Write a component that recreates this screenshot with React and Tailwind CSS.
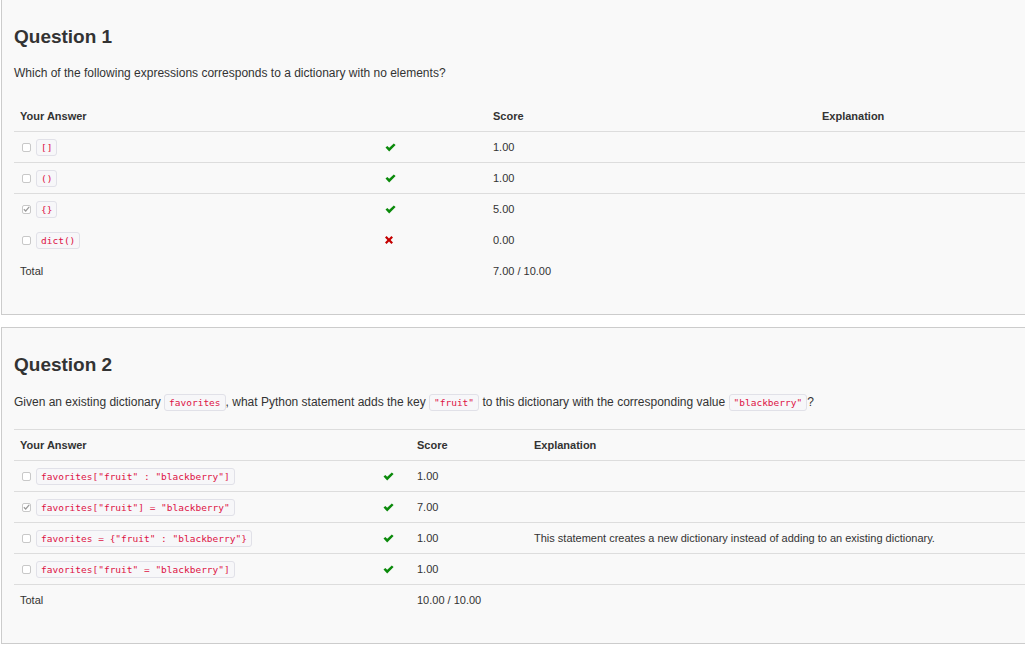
import React from 'react';

const Code = ({ children }) => (
  <code className="inline-block rounded-[3px] border border-[#e1e1e8] bg-[#f7f7f9] px-[4px] text-[9.5px] leading-[15px] text-[#dd1144] align-middle whitespace-pre font-['DejaVu_Sans_Mono',monospace]">
    {children}
  </code>
);

const Box = ({ checked }) => (
  <span className="ml-[2px] inline-flex h-[9px] w-[9px] shrink-0 items-center justify-center rounded-[2px] border border-[#c8c8c8] bg-white">
    {checked && (
      <svg width="7" height="6" viewBox="0 0 7 6">
        <path d="M0.8 3.2 L2.7 5 L6.2 0.8" fill="none" stroke="#9a9a9a" strokeWidth="1.2" />
      </svg>
    )}
  </span>
);

const Tick = () => (
  <svg width="11" height="9" viewBox="0 0 11 9">
    <path d="M0.5 4.6 L2.3 2.9 L4.2 4.8 L8.8 0.4 L10.6 2.1 L4.2 8.4 Z" fill="#0b8a0b" />
  </svg>
);

const Cross = () => (
  <svg width="8" height="8" viewBox="0 0 8 8">
    <path d="M1.6 0 L4 2.4 L6.4 0 L8 1.6 L5.6 4 L8 6.4 L6.4 8 L4 5.6 L1.6 8 L0 6.4 L2.4 4 L0 1.6 Z" fill="#c40000" />
  </svg>
);

const q1 = {
  title: 'Question 1',
  cols: 'grid-cols-[365px_108px_329px_1fr]',
  topLine: false,
  paraGap: 'mt-[15px]',
  rows: [
    { code: '[]', checked: false, ok: true, score: '1.00', line: true },
    { code: '()', checked: false, ok: true, score: '1.00', line: true },
    { code: '{}', checked: true, ok: true, score: '5.00', line: false },
    { code: 'dict()', checked: false, ok: false, score: '0.00', line: false },
  ],
  total: '7.00 / 10.00',
};

const q2 = {
  title: 'Question 2',
  cols: 'grid-cols-[363px_34px_117px_1fr]',
  topLine: true,
  paraGap: 'mt-[16px]',
  rows: [
    { code: 'favorites["fruit" : "blackberry"]', checked: false, ok: true, score: '1.00', line: true },
    { code: 'favorites["fruit"] = "blackberry"', checked: true, ok: true, score: '7.00', line: true },
    { code: 'favorites = {"fruit" : "blackberry"}', checked: false, ok: true, score: '1.00', line: true, note: 'This statement creates a new dictionary instead of adding to an existing dictionary.' },
    { code: 'favorites["fruit" = "blackberry"]', checked: false, ok: true, score: '1.00', line: true },
  ],
  total: '10.00 / 10.00',
};

const Cell = ({ children, className = '' }) => (
  <div className={`flex h-[30px] items-center px-[6px] ${className}`}>{children}</div>
);

const QuestionCard = ({ q, prompt, className = '' }) => (
  <section className={`w-[1060px] border border-[#cccccc] bg-[#f9f9f9] pl-[12px] pt-[25px] pb-[28px] ${className}`}>
    <h3 className="text-[19px] font-bold leading-[24px] text-[#333]">{q.title}</h3>
    <p className={`${q.paraGap} text-[12px] leading-[18px] text-[#333]`}>{prompt}</p>
    <div className="mt-[18px] text-[11px] text-[#333]">
      <div className={`grid ${q.cols} border-b border-t border-b-[#dddddd] ${q.topLine ? 'border-t-[#dddddd]' : 'border-t-transparent'} font-bold`}>
        <Cell>Your Answer</Cell>
        <Cell />
        <Cell>Score</Cell>
        <Cell>Explanation</Cell>
      </div>
      {q.rows.map((r, i) => (
        <div key={i} className={`grid ${q.cols} border-b ${r.line ? 'border-[#dddddd]' : 'border-transparent'}`}>
          <Cell className="gap-[5px]">
            <Box checked={r.checked} />
            <Code>{r.code}</Code>
          </Cell>
          <Cell>{r.ok ? <Tick /> : <Cross />}</Cell>
          <Cell>{r.score}</Cell>
          <Cell className="whitespace-nowrap">{r.note}</Cell>
        </div>
      ))}
      <div className={`grid ${q.cols}`}>
        <Cell>Total</Cell>
        <Cell />
        <Cell>{q.total}</Cell>
        <Cell />
      </div>
    </div>
  </section>
);

export default function App() {
  return (
    <div className="h-[651px] w-full overflow-hidden bg-white pl-px font-['Liberation_Sans',Arial,sans-serif]">
      <QuestionCard
        q={q1}
        className="-mt-px"
        prompt="Which of the following expressions corresponds to a dictionary with no elements?"
      />
      <QuestionCard
        q={q2}
        className="mt-[12px]"
        prompt={
          <>
            Given an existing dictionary <Code>favorites</Code>, what Python statement adds the key <Code>"fruit"</Code> to this dictionary with the corresponding value <Code>"blackberry"</Code>?
          </>
        }
      />
    </div>
  );
}
